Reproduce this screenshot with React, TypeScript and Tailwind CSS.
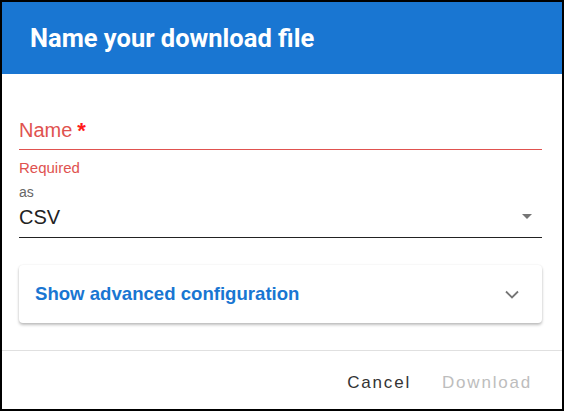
export default function App() {
  return (
    <div className="w-[564px] h-[411px] border-2 border-black bg-white flex flex-col [font-family:'Liberation_Sans',Arial,sans-serif]">
      {/* Header */}
      <div className="h-[72px] shrink-0 bg-[#1976d2] flex items-center px-[28px]">
        <h1 className="text-white text-[25.5px] font-bold [font-family:Roboto,sans-serif] mt-[1px]">Name your download file</h1>
      </div>

      {/* Body */}
      <div className="flex-1 pl-[17px] pr-[20px] pt-[45px]">
        {/* Name field */}
        <div className="border-b border-[#e0524f] h-[31px] flex items-start">
          <span className="text-[20px] leading-[23px] text-[#e0524f]">Name</span>
          <span className="text-[22px] leading-[23px] font-bold text-[#ff1a1a] ml-[5px]">*</span>
        </div>
        <p className="mt-[9px] text-[15px] leading-[17px] text-[#e0524f]">Required</p>

        {/* Format select */}
        <p className="mt-[8px] text-[14px] leading-[16px] text-[#666]">as</p>
        <div className="border-b border-[#222] h-[38px] pt-[6px] flex items-start justify-between">
          <span className="text-[20px] leading-[23px] text-[#222]">CSV</span>
          <svg width="10" height="5" viewBox="0 0 10 5" className="mr-[10px] mt-[8px]">
            <path d="M0 0 L10 0 L5 5 Z" fill="#757575" />
          </svg>
        </div>

        {/* Advanced */}
        <div className="mt-[27px] h-[58px] rounded-[4px] bg-white shadow-[0_2px_3px_rgba(0,0,0,0.25),0_0_2px_rgba(0,0,0,0.08)] flex items-center justify-between px-[16px]">
          <span className="text-[18.6px] font-bold text-[#1976d2]">Show advanced configuration</span>
          <svg width="14" height="9" viewBox="0 0 14 9" className="mr-[7px]">
            <path d="M1 1.5 L7 7.5 L13 1.5" fill="none" stroke="#757575" strokeWidth="1.8" />
          </svg>
        </div>
      </div>

      {/* Footer */}
      <div className="h-[59px] shrink-0 border-t border-[#e0e0e0] flex items-center justify-end gap-[31px] pr-[30px] pt-[6px]">
        <span className="text-[17px] leading-[20px] tracking-[1.8px] text-[#333]">Cancel</span>
        <span className="text-[17px] leading-[20px] tracking-[1.8px] text-[#bdbdbd]">Download</span>
      </div>
    </div>
  );
}
